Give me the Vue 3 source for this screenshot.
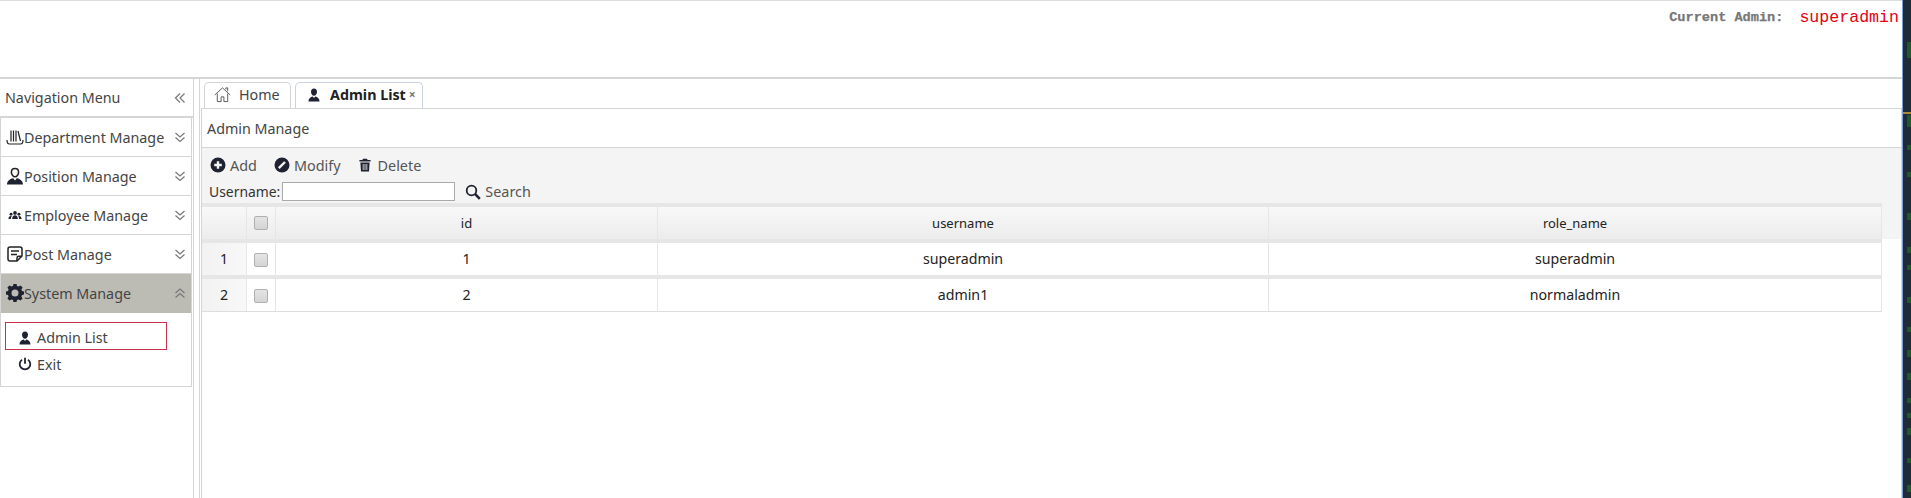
<script setup>
const menus = [
  { name: 'Department Manage', icon: 'dept' },
  { name: 'Position Manage', icon: 'pos' },
  { name: 'Employee Manage', icon: 'emp' },
  { name: 'Post Manage', icon: 'post' }
]

const rows = [
  { id: 1, username: 'superadmin', role: 'superadmin' },
  { id: 2, username: 'admin1', role: 'normaladmin' }
]

// green marks on the strip at the right edge: [y, height]
const marks = [
  [42, 16], [115, 12], [145, 5], [172, 5], [213, 7], [247, 6], [265, 5], [297, 6],
  [327, 5], [350, 7], [373, 7], [398, 5], [413, 5], [428, 7], [458, 5], [485, 7]
]
</script>

<template>
  <div class="page">
    <div class="window">
      <header class="top">
        <span class="cur-label">Current Admin:</span>
        <span class="cur-name">superadmin</span>
      </header>

      <div class="body">
        <aside class="side">
          <div class="side-title">
            <span>Navigation Menu</span>
            <svg class="arrows" viewBox="0 0 12 12"><path d="M6 1.500 1.500 6 6 10.500M10.500 1.500 6 6l4.500 4.500" /></svg>
          </div>
          <div class="accordion">
            <div v-for="m in menus" :key="m.name" class="acc-head">
              <svg v-if="m.icon === 'dept'" class="acc-icon" viewBox="0 0 18 18">
                <path class="line" d="M1 12c0 3 1 4 2.500 4h11c1.500 0 2.500-1 2.500-4M5 2.500v11M7.500 2.500v11M10 2.500v11M12 3l2.500 10" />
              </svg>
              <svg v-else-if="m.icon === 'pos'" class="acc-icon" viewBox="0 0 18 18">
                <path class="line thick" d="M9 1.500c2.400 0 3.600 1.700 3.600 3.700S11 9.800 9 9.800 5.400 7.200 5.400 5.200 6.600 1.500 9 1.500z" />
                <path class="solid" d="M1 17.500c0-3.500 2.500-5.500 6.200-6.300L9 13.500l1.800-2.300c3.700.8 6.200 2.800 6.200 6.300z" />
              </svg>
              <svg v-else-if="m.icon === 'emp'" class="acc-icon" viewBox="-2 -2 22 22">
                <circle class="solid" cx="9" cy="6.500" r="2.300" />
                <circle class="solid" cx="4.200" cy="8" r="1.800" />
                <circle class="solid" cx="13.800" cy="8" r="1.800" />
                <path class="solid" d="M5.500 14c0-3 1.500-4.600 3.500-4.600s3.500 1.600 3.500 4.600zM1 14c0-2.400 1.200-3.800 3-3.800.4 0 .7.100 1 .2-.7.900-1 2.200-1 3.600zM17 14c0-2.400-1.200-3.800-3-3.800-.4 0-.7.100-1 .2.700.9 1 2.200 1 3.600z" />
              </svg>
              <svg v-else class="acc-icon" viewBox="0 0 18 18">
                <path class="line thick" d="M11 16H4c-1.200 0-2-.8-2-2V4c0-1.200.8-2 2-2h10c1.200 0 2 .8 2 2v7z" />
                <path class="line thick" d="M5 6h8M5 9.500h6M11 16v-3c0-1 .7-1.700 1.700-1.700H16" />
              </svg>
              <span class="acc-name">{{ m.name }}</span>
              <svg class="acc-arrow" viewBox="0 0 12 12"><path d="M1.500 2 6 6l4.500-4M1.500 6.500 6 10.500l4.500-4" /></svg>
            </div>

            <div class="acc-head active">
              <svg class="acc-icon" viewBox="0 0 18 18">
                <path class="solid" fill-rule="evenodd" d="M7.500.8h3l.5 2.300 1.500.6 2-1.200 2.100 2.100-1.200 2 .6 1.500 2.300.5v3l-2.300.5-.6 1.500 1.200 2-2.100 2.100-2-1.200-1.500.6-.5 2.300h-3L7 17.100l-1.500-.6-2 1.200-2.100-2.100 1.200-2-.6-1.500L-.3 11.600v-3L2 8.100l.6-1.500-1.200-2 2.100-2.100 2 1.200L7 3.100zM9 6.500a3.500 3.500 0 1 0 0 7 3.500 3.500 0 0 0 0-7z" transform="translate(0 -1.100)" />
              </svg>
              <span class="acc-name">System Manage</span>
              <svg class="acc-arrow" viewBox="0 0 12 12"><path d="M1.500 6 6 2l4.500 4M1.500 10.500 6 6.500l4.500 4" /></svg>
            </div>
            <div class="acc-body">
              <div class="sub selected">
                <svg class="sub-icon" viewBox="0 0 14 14">
                  <path class="solid" d="M7 .5c1.900 0 3 1.400 3 3.200S8.700 7.800 7 7.800 4 5.500 4 3.700 5.100.5 7 .5zM1.500 13.500c0-2.800 1.700-4.500 4.300-5L7 10l1.200-1.500c2.600.5 4.300 2.200 4.300 5z" />
                </svg>
                <span>Admin List</span>
              </div>
              <div class="sub">
                <svg class="sub-icon" viewBox="0 0 14 14">
                  <path class="line wide" d="M4 2.800a5.300 5.300 0 1 0 6 0M7 .8v6" />
                </svg>
                <span>Exit</span>
              </div>
            </div>
          </div>
        </aside>

        <main class="main">
          <div class="tabs">
            <div class="tab">
              <svg class="tab-icon" viewBox="0 0 18 18">
                <path class="line home" d="M.8 9.500 9 2l8.200 7.500M3.500 8v8.500h4v-5h3v5h4V8M12.500 3.500V2h2v3.500" />
              </svg>
              <span>Home</span>
            </div>
            <div class="tab current">
              <svg class="tab-icon person" viewBox="0 0 14 14">
                <path class="solid" d="M7 .5c1.900 0 3 1.400 3 3.200S8.700 7.800 7 7.800 4 5.500 4 3.700 5.100.5 7 .5zM1.500 13.500c0-2.800 1.700-4.500 4.300-5L7 10l1.200-1.500c2.600.5 4.300 2.200 4.300 5z" />
              </svg>
              <b class="tab-text">Admin List</b>
              <span class="tab-close">×</span>
            </div>
          </div>

          <div class="panel">
            <div class="panel-title">Admin Manage</div>
            <div class="toolbar">
              <div class="tool-row">
                <span class="tool">
                  <svg class="tool-icon" viewBox="0 0 16 16">
                    <circle class="solid" cx="8" cy="8" r="7.500" />
                    <path class="cut" d="M8 4.200v7.600M4.200 8h7.600" />
                  </svg>
                  Add
                </span>
                <span class="tool">
                  <svg class="tool-icon" viewBox="0 0 16 16">
                    <circle class="solid" cx="8" cy="8" r="7.500" />
                    <path class="cut" d="M4.800 11.200 11 5" />
                  </svg>
                  Modify
                </span>
                <span class="tool">
                  <svg class="tool-icon small" viewBox="0 0 14 14">
                    <path class="solid" d="M5 .8h4l.6 1.200h3v1.500H1.400V2h3zM2.400 4.500h9.200l-.6 9H3z" />
                    <path class="cut thin" d="M5.200 6v6M7 6v6M8.800 6v6" />
                  </svg>
                  Delete
                </span>
              </div>
              <div class="search-row">
                <label class="search-label">Username:</label>
                <input class="search-input" type="text" />
                <span class="tool search-btn">
                  <svg class="tool-icon" viewBox="0 0 16 16">
                    <circle class="line wide" cx="6.500" cy="6.500" r="4.800" />
                    <path class="line heavy" d="m10.200 10.200 4.600 4.600" />
                  </svg>
                  Search
                </span>
              </div>
            </div>

            <div class="grid-wrap">
              <table class="grid">
                <colgroup>
                  <col class="c-num" />
                  <col class="c-check" />
                  <col class="c-id" />
                  <col class="c-user" />
                  <col class="c-role" />
                </colgroup>
                <thead>
                  <tr>
                    <th class="num"></th>
                    <th class="check"><span class="box"></span></th>
                    <th>id</th>
                    <th>username</th>
                    <th>role_name</th>
                  </tr>
                </thead>
                <tbody>
                  <tr v-for="r in rows" :key="r.id">
                    <td class="num">{{ r.id }}</td>
                    <td class="check"><span class="box"></span></td>
                    <td>{{ r.id }}</td>
                    <td>{{ r.username }}</td>
                    <td>{{ r.role }}</td>
                  </tr>
                </tbody>
              </table>
            </div>
          </div>
        </main>
      </div>
    </div>

    <svg class="strip" viewBox="0 0 8 498" width="8" height="498">
      <rect x="0" y="0" width="8" height="498" fill="#1f2b36" />
      <rect x="0" y="112" width="8" height="2" fill="#b08a2e" />
      <rect v-for="m in marks" :key="m[0]" x="4" :y="m[0]" width="4" :height="m[1]" fill="#1d5a2c" />
    </svg>
  </div>
</template>

<style>
html, body {
  margin: 0;
  background: #fff;
  overflow: hidden;
}
</style>

<style scoped>
.page {
  display: flex;
  width: 1911px;
  height: 498px;
  overflow: hidden;
  font-family: "Noto Sans", "Open Sans", sans-serif;
  color: #333;
}

.window {
  flex: 1;
  min-width: 0;
  display: flex;
  flex-direction: column;
  border-right: 1px solid #7c9fd8;
}

.strip {
  flex: none;
}

.top {
  height: 76px;
  flex: none;
  border-top: 1px solid #ddd;
  border-bottom: 2px solid #d5d5d5;
  display: flex;
  align-items: flex-start;
  justify-content: flex-end;
  padding-right: 3px;
  font-family: "Liberation Mono", monospace;
}

.cur-label {
  margin-top: 9px;
  font-size: 13.6px;
  font-weight: bold;
  color: #777;
  -webkit-text-stroke: 0.25px #777;
}

.cur-name {
  margin-top: 7px;
  margin-left: 16px;
  font-size: 16.6px;
  color: #e60012;
}

.body {
  flex: 1;
  display: flex;
  min-height: 0;
}

.side {
  width: 193px;
  flex: none;
  border-right: 1px solid #d5d5d5;
}

.side-title {
  height: 37px;
  display: flex;
  align-items: center;
  justify-content: space-between;
  padding: 0 7px 0 5px;
  font-size: 14.3px;
  color: #444;
  border-bottom: 2px solid #d5d5d5;
}

.arrows {
  width: 12px;
  height: 12px;
}

.arrows path,
.acc-arrow path {
  fill: none;
  stroke: #777;
  stroke-width: 1.2;
}

.accordion {
  border-left: 1px solid #d5d5d5;
  border-right: 1px solid #d5d5d5;
  border-bottom: 1px solid #d5d5d5;
  margin-right: 1px;
}

.acc-head {
  height: 38px;
  display: flex;
  align-items: center;
  padding: 0 5px 0 5px;
  border-bottom: 1px solid #d5d5d5;
  font-size: 14.3px;
  color: #444;
}

.acc-head.active {
  background: #bdbcb4;
  border-bottom: 1px solid #bdbcb4;
}

.acc-icon {
  width: 18px;
  height: 18px;
  flex: none;
}

.acc-name {
  flex: 1;
  white-space: nowrap;
}

.acc-arrow {
  width: 12px;
  height: 12px;
  flex: none;
}

.acc-body {
  height: 73px;
  box-sizing: border-box;
  padding: 9px 0 0 4px;
  font-size: 14.3px;
  color: #444;
}

.sub {
  width: 162px;
  height: 28px;
  box-sizing: border-box;
  display: flex;
  align-items: center;
  padding-left: 12px;
  border: 1px solid transparent;
}

.sub.selected {
  padding-top: 3px;
  border-color: #c9304a;
}

.sub-icon {
  width: 14px;
  height: 14px;
  margin-right: 5px;
  flex: none;
}

.solid {
  fill: #1f2230;
}

.line {
  fill: none;
  stroke: #222;
  stroke-width: 1.2;
}

.line.home {
  stroke: #555;
  stroke-width: 1;
}

.line.thick {
  stroke-width: 1.5;
}

.line.wide {
  stroke-width: 1.8;
  stroke: #1f2230;
}

.line.heavy {
  stroke-width: 2.6;
  stroke: #1f2230;
}

.cut {
  fill: none;
  stroke: #f4f4f4;
  stroke-width: 2.4;
}

.cut.thin {
  stroke-width: 0.8;
}

.main {
  flex: 1;
  min-width: 0;
  margin-left: 5px;
  border-left: 1px solid #d5d5d5;
  display: flex;
  flex-direction: column;
}

.tabs {
  height: 29px;
  flex: none;
  display: flex;
  align-items: flex-end;
  gap: 4px;
  padding-left: 4px;
}

.tab {
  height: 26px;
  box-sizing: border-box;
  display: flex;
  align-items: center;
  padding: 0 9px 2px;
  border: 1px solid #d5d5d5;
  border-bottom: 0;
  border-radius: 5px 5px 0 0;
  font-size: 14.3px;
  color: #444;
  width: 87px;
}

.tab.current {
  width: 128px;
  border-color: #c9d3e0;
  background: #fff;
  color: #222;
  padding-left: 11px;
}

.tab-icon {
  width: 17px;
  height: 17px;
  margin-right: 8px;
  flex: none;
}

.tab-icon.person {
  width: 14px;
  height: 14px;
  margin-right: 9px;
}

.tab-text {
  white-space: nowrap;
}

.tab-close {
  margin-left: 3px;
  font-weight: bold;
  color: #777;
  font-size: 12px;
}

.panel {
  flex: 1;
  min-height: 0;
  margin-left: 1px;
  border: 1px solid #d5d5d5;
  border-bottom: 0;
  display: flex;
  flex-direction: column;
}

.panel-title {
  height: 38px;
  flex: none;
  display: flex;
  align-items: center;
  padding-left: 5px;
  font-size: 14.3px;
  color: #444;
  border-bottom: 1px solid #d5d5d5;
}

.toolbar {
  height: 55px;
  flex: none;
  background: #f4f4f4;
  font-size: 14.4px;
  color: #555;
}

.tool-row {
  height: 34px;
  display: flex;
  align-items: center;
  padding-left: 8px;
  gap: 17px;
}

.tool {
  display: inline-flex;
  align-items: center;
  gap: 4px;
  line-height: 19px;
}

.tool-icon {
  width: 16px;
  height: 16px;
  flex: none;
}

.tool-icon.small {
  width: 14px;
  height: 14px;
  margin-right: 2px;
}

.search-row {
  height: 21px;
  display: flex;
  align-items: flex-start;
  padding-left: 7px;
  line-height: 19px;
}

.search-label {
  color: #333;
  font-size: 13.9px;
}

.search-input {
  width: 173px;
  height: 19px;
  box-sizing: border-box;
  margin: 0 0 0 2px;
  padding: 0;
  border: 1px solid #a9a9a9;
  background: #fff;
}

.search-btn {
  margin-left: 10px;
}

.grid-wrap {
  flex: 1;
  background: linear-gradient(#f4f4f4, #f4f4f4) no-repeat 0 0 / 100% 36px;
}

.grid {
  width: 1680px;
  table-layout: fixed;
  border-collapse: separate;
  border-spacing: 0;
  font-size: 14.2px;
  color: #222;
}

.c-num { width: 44px; }
.c-check { width: 29px; }
.c-id { width: 382px; }
.c-user { width: 611px; }
.c-role { width: 614px; }

.grid th,
.grid td {
  box-sizing: border-box;
  height: 36px;
  padding: 0;
  border-top: 4px solid #e6e6e6;
  border-left: 1px solid #e6e6e6;
}

.grid th {
  font-weight: normal;
  font-size: 13px;
  background: linear-gradient(#f8f8f8, #ececec);
}

.grid th.check {
  padding-bottom: 3px;
}

.grid td {
  padding-bottom: 2px;
  text-align: center;
}

.grid tbody tr:last-child td {
  height: 37px;
  border-bottom: 1px solid #ddd;
}

.grid th:first-child,
.grid td:first-child {
  border-left: 0;
}

.grid th:last-child,
.grid td:last-child {
  border-right: 1px solid #e6e6e6;
}

.grid td.num {
  background: linear-gradient(90deg, #f2f2f2, #f8f8f8);
}

.box {
  display: inline-block;
  width: 14px;
  height: 14px;
  box-sizing: border-box;
  vertical-align: middle;
  border: 1px solid #b0b0b0;
  border-radius: 2px;
  background: linear-gradient(#e4e4e4, #d4d4d4);
}
</style>
